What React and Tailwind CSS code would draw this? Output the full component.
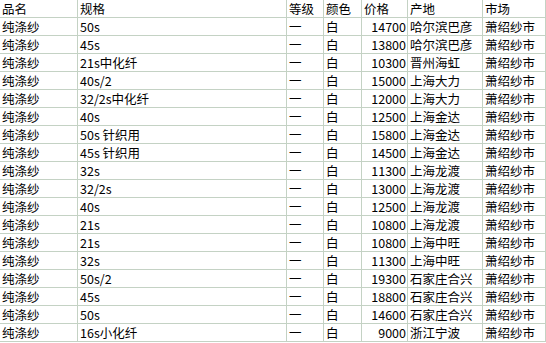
const rows = [
  ['50s', '14700', '哈尔滨巴彦'],
  ['45s', '13800', '哈尔滨巴彦'],
  ['21s中化纤', '10300', '晋州海虹'],
  ['40s/2', '15000', '上海大力'],
  ['32/2s中化纤', '12000', '上海大力'],
  ['40s', '12500', '上海金达'],
  ['50s 针织用', '15800', '上海金达'],
  ['45s 针织用', '14500', '上海金达'],
  ['32s', '11300', '上海龙渡'],
  ['32/2s', '13000', '上海龙渡'],
  ['40s', '12500', '上海龙渡'],
  ['21s', '10800', '上海龙渡'],
  ['21s', '10800', '上海中旺'],
  ['32s', '11300', '上海中旺'],
  ['50s/2', '19300', '石家庄合兴'],
  ['45s', '18800', '石家庄合兴'],
  ['50s', '14600', '石家庄合兴'],
  ['16s小化纤', '9000', '浙江宁波'],
];

const cell = 'h-[18px] border-r border-b border-[#c4d2c4] pl-[2px] pr-[1px] leading-[17px] whitespace-nowrap overflow-hidden';

export default function App() {
  return (
    <div
      className="w-[546px] h-[343px] bg-white text-black text-[12.5px] overflow-hidden"
      style={{ fontFamily: '"Noto Sans CJK SC", sans-serif' }}
    >
      <div className="grid grid-cols-[78px_209px_37px_38px_46px_75px_63px]">
        <div className={cell}>品名</div>
        <div className={cell}>规格</div>
        <div className={cell}>等级</div>
        <div className={cell}>颜色</div>
        <div className={cell}>价格</div>
        <div className={cell}>产地</div>
        <div className={cell}>市场</div>
        {rows.map(([spec, price, origin], i) => (
          <div key={i} className="contents">
            <div className={cell}>纯涤纱</div>
            <div className={cell}>{spec}</div>
            <div className={cell}>一</div>
            <div className={cell}>白</div>
            <div className={cell + ' text-right'}>{price}</div>
            <div className={cell}>{origin}</div>
            <div className={cell}>萧绍纱市</div>
          </div>
        ))}
      </div>
    </div>
  );
}
